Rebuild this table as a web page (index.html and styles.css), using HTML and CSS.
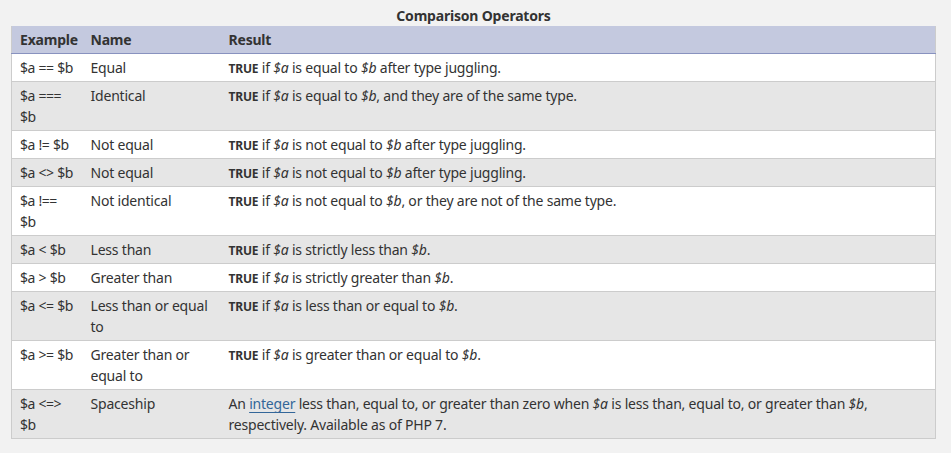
FILE: index.html
```
<!DOCTYPE html>
<html>
<head>
<meta charset="utf-8">
<link rel="stylesheet" href="styles.css">
</head>
<body>
<table class="doctable">
<caption>Comparison Operators</caption>
<colgroup><col class="c-ex"><col class="c-name"><col></colgroup>
<thead>
<tr><th>Example</th><th>Name</th><th>Result</th></tr>
</thead>
<tbody>
<tr><td>$a == $b</td><td>Equal</td><td><b class="const">TRUE</b> if <i>$a</i> is equal to <i>$b</i> after type juggling.</td></tr>
<tr><td>$a === $b</td><td>Identical</td><td><b class="const">TRUE</b> if <i>$a</i> is equal to <i>$b</i>, and they are of the same type.</td></tr>
<tr><td>$a != $b</td><td>Not equal</td><td><b class="const">TRUE</b> if <i>$a</i> is not equal to <i>$b</i> after type juggling.</td></tr>
<tr><td>$a &lt;&gt; $b</td><td>Not equal</td><td><b class="const">TRUE</b> if <i>$a</i> is not equal to <i>$b</i> after type juggling.</td></tr>
<tr><td>$a !== $b</td><td>Not identical</td><td><b class="const">TRUE</b> if <i>$a</i> is not equal to <i>$b</i>, or they are not of the same type.</td></tr>
<tr><td>$a &lt; $b</td><td>Less than</td><td><b class="const">TRUE</b> if <i>$a</i> is strictly less than <i>$b</i>.</td></tr>
<tr><td>$a &gt; $b</td><td>Greater than</td><td><b class="const">TRUE</b> if <i>$a</i> is strictly greater than <i>$b</i>.</td></tr>
<tr><td>$a &lt;= $b</td><td>Less than or equal to</td><td><b class="const">TRUE</b> if <i>$a</i> is less than or equal to <i>$b</i>.</td></tr>
<tr><td>$a &gt;= $b</td><td>Greater than or equal to</td><td><b class="const">TRUE</b> if <i>$a</i> is greater than or equal to <i>$b</i>.</td></tr>
<tr><td>$a &lt;=&gt; $b</td><td>Spaceship</td><td>An <a class="type" href="#">integer</a> less than, equal to, or greater than zero when <i>$a</i> is less than, equal to, or greater than <i>$b</i>, respectively. Available as of PHP 7.</td></tr>
</tbody>
</table>
</body>
</html>
```
FILE: styles.css
```
html, body {
  margin: 0;
  background: #f2f2f2;
}
body {
  padding: 5px 15px 0 11px;
  font-family: "Noto Sans", "Open Sans", sans-serif;
  font-size: 14px;
  line-height: 21px;
  letter-spacing: -0.2px;
  color: #333;
}
.doctable {
  width: 925px;
  table-layout: fixed;
  border-collapse: collapse;
  border: 1px solid #ccc;
  border-top: 0;
  background: #fff;
}
.doctable caption {
  font-weight: bold;
  text-align: center;
  line-height: 21px;
  color: #333;
}
.c-ex { width: 71px; }
.c-name { width: 138px; }
.doctable th {
  text-align: left;
  font-weight: bold;
  background: #c4c9df;
  border-bottom: 1px solid #8892bf;
  padding: 3px 8px 3px 8px;
  vertical-align: top;
  white-space: nowrap;
}
.doctable td {
  padding: 3px 8px 3px 8px;
  vertical-align: top;
  border-top: 1px solid #ccc;
}
.doctable td:first-child {
  letter-spacing: -0.5px;
  word-spacing: 0.5px;
}
.doctable thead + tbody tr:first-child td {
  border-top: 0;
}
.doctable tbody tr:nth-child(even) td {
  background: #e6e6e6;
}
.const {
  font-size: 12px;
  line-height: 1;
  font-weight: bold;
}
i {
  font-style: italic;
  line-height: 1;
}
a.type {
  color: #369;
  text-decoration: underline;
  text-underline-offset: 3px;
}
```
